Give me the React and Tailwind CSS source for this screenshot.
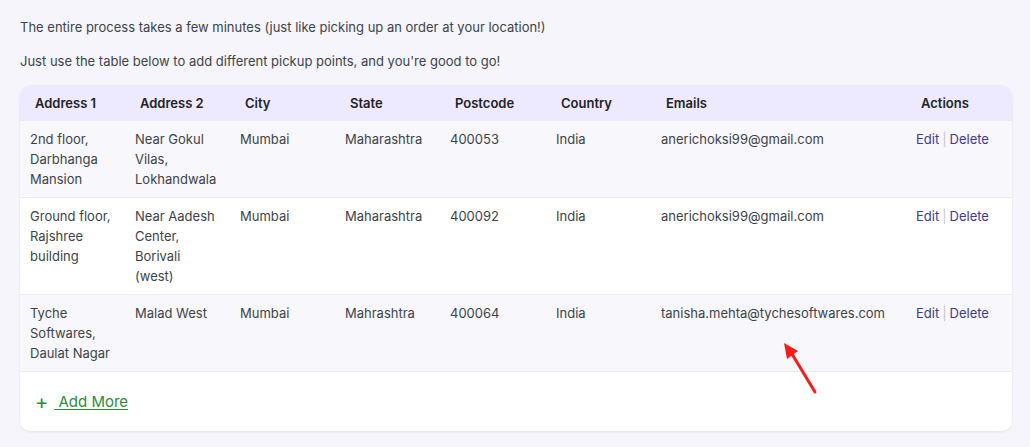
import React from "react";

const rows = [
  {
    a1: "2nd floor, Darbhanga Mansion",
    a2: "Near Gokul Vilas, Lokhandwala",
    city: "Mumbai",
    state: "Maharashtra",
    pin: "400053",
    country: "India",
    email: "anerichoksi99@gmail.com",
    bg: "bg-[#f8f7fc]",
  },
  {
    a1: "Ground floor, Rajshree building",
    a2: "Near Aadesh Center, Borivali (west)",
    city: "Mumbai",
    state: "Maharashtra",
    pin: "400092",
    country: "India",
    email: "anerichoksi99@gmail.com",
    bg: "bg-white",
  },
  {
    a1: "Tyche Softwares, Daulat Nagar",
    a2: "Malad West",
    city: "Mumbai",
    state: "Mahrashtra",
    pin: "400064",
    country: "India",
    email: "tanisha.mehta@tychesoftwares.com",
    bg: "bg-[#f8f7fc]",
  },
];

const Th = ({ children, w }) => (
  <th className={`${w} h-[36px] pl-[15px] pr-2 text-left align-middle font-semibold text-[#1d2327]`}>
    {children}
  </th>
);

const Td = ({ children }) => (
  <td className="pl-[10px] pr-[12px] pt-[8px] pb-[8px] align-top">{children}</td>
);

const App = () => {
  return (
    <div className="relative min-h-[447px] w-[1030px] bg-[#f6f5fb] px-5 pt-[17px] font-['Inter',sans-serif] text-[13px] leading-[20px] text-[#3c434a]">
      <p>The entire process takes a few minutes (just like picking up an order at your location!)</p>
      <p className="mt-[14px]">Just use the table below to add different pickup points, and you're good to go!</p>

      <div className="mt-[14px] w-[992px] overflow-hidden rounded-[10px] bg-white shadow-[0_1px_3px_rgba(0,0,0,0.08)]">
        <table className="w-full table-fixed border-collapse">
          <thead>
            <tr className="bg-[#ede9fe]">
              <Th w="w-[105px]">Address 1</Th>
              <Th w="w-[105px]">Address 2</Th>
              <Th w="w-[105px]">City</Th>
              <Th w="w-[105px]">State</Th>
              <Th w="w-[106px]">Postcode</Th>
              <Th w="w-[105px]">Country</Th>
              <Th w="w-[255px]">Emails</Th>
              <Th w="w-[106px]">Actions</Th>
            </tr>
          </thead>
          <tbody>
            {rows.map((r, i) => (
              <tr key={i} className={`${r.bg} border-b border-[#ecebf2]`}>
                <Td>{r.a1}</Td>
                <Td>{r.a2}</Td>
                <Td>{r.city}</Td>
                <Td>{r.state}</Td>
                <Td>{r.pin}</Td>
                <Td>{r.country}</Td>
                <Td>{r.email}</Td>
                <Td>
                  <span className="whitespace-nowrap text-[#3e3a96]">
                    Edit<span className="mx-[3px] text-[#c3c4c7]">|</span>Delete
                  </span>
                </Td>
              </tr>
            ))}
          </tbody>
        </table>
        <div className="flex h-[59px] items-center pl-[15px] text-[15px]">
          <span className="text-[20px] leading-none text-[#2e8b3e]">+</span>
          <a href="#" className="ml-[6px] whitespace-pre text-[#2e8b3e] underline underline-offset-2">
            {" Add More"}
          </a>
        </div>
      </div>

      <svg className="absolute left-[778px] top-[338px]" width="44" height="60" viewBox="0 0 44 60">
        <line x1="37" y1="54" x2="14" y2="16" stroke="#ff1a1a" strokeWidth="3" strokeLinecap="round" />
        <polygon points="6,5 20,13 9,21" fill="#ff1a1a" />
      </svg>
    </div>
  );
};

export default App;
